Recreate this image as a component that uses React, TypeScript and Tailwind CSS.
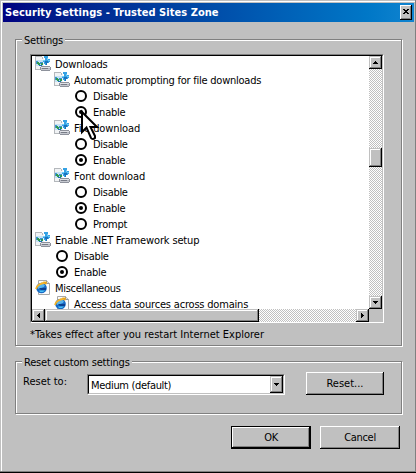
import React from "react";

const raised =
  "bg-[#c0c0c0] shadow-[inset_-1px_-1px_#000,inset_1px_1px_#fff,inset_-2px_-2px_#808080]";
const scrollRaised =
  "bg-[#c0c0c0] shadow-[inset_-1px_-1px_#000,inset_1px_1px_#c0c0c0,inset_-2px_-2px_#808080,inset_2px_2px_#fff]";
const dither =
  "bg-[repeating-conic-gradient(#c0c0c0_0_25%,#fff_0_50%)] bg-[length:2px_2px]";

function DownloadIcon() {
  return (
    <svg width="16" height="16" viewBox="0 0 16 16" className="shrink-0" shapeRendering="crispEdges">
      <path d="M0 0h7l2 3v10H0z" fill="#f1f3f5" />
      <path d="M0 0h1v14H0zM1 0h6v1H1zM7 1h1v2H7zM1 13h4v1H1z" fill="#b4b8bc" />
      <path d="M1 4h7v6H1z" fill="#c4e2f4" />
      <path d="M1 5h2v3H1zM5 6h3v2H5z" fill="#3f95d0" />
      <path d="M2 6h2v2H2zM6 7h2v2H6zM3 7h2v2H3z" fill="#2f9a50" />
      <path d="M4 9h3v1H4z" fill="#1d6fb4" />
      <path d="M9 0h4v3h2v3h-1v1h-2v2h-2V8H9V6H8V4h2V2H9z" fill="#35a2e4" />
      <path d="M12 2h1v2h-1zM8 4h2v1H8zM13 4h2v1h-2z" fill="#74cdf8" />
      <path d="M10 5h3v2h-1v2h-1V7h-1z" fill="#1a72be" />
      <path d="M6 10h9v1h1v3h-1v1H6v-1H5v-3h1z" fill="#8e929c" />
      <path d="M6 11h9v1H6z" fill="#dfe1e6" />
      <path d="M6 12h9v1H6z" fill="#b4b7c0" />
      <path d="M7 12h6v1H7z" fill="#777b86" />
      <path d="M6 13h9v1H6z" fill="#c6c9d0" />
    </svg>
  );
}

function PageIcon() {
  return (
    <svg width="16" height="16" viewBox="0 0 16 16" className="shrink-0">
      <path d="M3.5.5h8l3 3v11h-11z" fill="#fcfcfc" stroke="#a8a8a8" />
      <path d="M11.5.5v3h3" fill="#ddd" stroke="#999" />
      <circle cx="6.500" cy="8" r="5.300" fill="#1769c4" />
      <path d="M3 6q3-4 7-1l-1 2-6 2z" fill="#57b4ee" />
      <path d="M4 8h7v2H6z" fill="#0b3f8f" />
      <path d="M4 10.500h6l-2 1.500H5z" fill="#48c0f4" />
      <path d="M1 9C2 5 6 3 11.500 2.500" fill="none" stroke="#f3b32c" strokeWidth="1.800" />
      <path d="M8 1.500l4 .5-1 3z" fill="#e9a41c" />
    </svg>
  );
}

function Radio({ on }: { on?: boolean }) {
  return (
    <svg width="12" height="12" viewBox="0 0 12 12" className="shrink-0">
      <circle cx="6" cy="6" r="5" fill="#fff" stroke="#000" strokeWidth="2" />
      {on && <circle cx="6" cy="6" r="2" />}
    </svg>
  );
}

type Item = { kind: "dl" | "page" | "on" | "off"; pad: string; text: string; track: string };

const items: Item[] = [
  { kind: "dl", pad: "pl-[3px]", text: "Downloads", track: "tracking-[-0.2px]" },
  { kind: "dl", pad: "pl-[22px]", text: "Automatic prompting for file downloads", track: "tracking-[-0.24px]" },
  { kind: "off", pad: "pl-[43px]", text: "Disable", track: "tracking-[-0.3px]" },
  { kind: "on", pad: "pl-[43px]", text: "Enable", track: "tracking-[-0.2px]" },
  { kind: "dl", pad: "pl-[22px]", text: "File download", track: "tracking-[-0.1px]" },
  { kind: "off", pad: "pl-[43px]", text: "Disable", track: "tracking-[-0.3px]" },
  { kind: "on", pad: "pl-[43px]", text: "Enable", track: "tracking-[-0.2px]" },
  { kind: "dl", pad: "pl-[22px]", text: "Font download", track: "tracking-[-0.1px]" },
  { kind: "off", pad: "pl-[43px]", text: "Disable", track: "tracking-[-0.3px]" },
  { kind: "on", pad: "pl-[43px]", text: "Enable", track: "tracking-[-0.2px]" },
  { kind: "off", pad: "pl-[43px]", text: "Prompt", track: "tracking-[-0.2px]" },
  { kind: "dl", pad: "pl-[3px]", text: "Enable .NET Framework setup", track: "tracking-[-0.15px]" },
  { kind: "off", pad: "pl-[24px]", text: "Disable", track: "tracking-[-0.3px]" },
  { kind: "on", pad: "pl-[24px]", text: "Enable", track: "tracking-[-0.2px]" },
  { kind: "page", pad: "pl-[3px]", text: "Miscellaneous", track: "tracking-[-0.3px]" },
  { kind: "page", pad: "pl-[22px]", text: "Access data sources across domains", track: "tracking-[-0.19px]" },
];

function Row({ item }: { item: Item }) {
  const radio = item.kind === "on" || item.kind === "off";
  return (
    <div className={`flex h-4 shrink-0 items-center ${radio ? "gap-1.5" : "gap-1"} ${item.pad}`}>
      {item.kind === "dl" && <DownloadIcon />}
      {item.kind === "page" && <PageIcon />}
      {radio && <Radio on={item.kind === "on"} />}
      <span className={`pt-[2px] ${item.track}`}>{item.text}</span>
    </div>
  );
}

function Arrow({ d }: { d: string }) {
  return (
    <svg width="7" height="7" viewBox="0 0 7 7" shapeRendering="crispEdges">
      <path d={d} />
    </svg>
  );
}
const up = "M3 2h1v1h1v1h1v1H1V4h1V3h1z";
const down = "M1 2h5v1H5v1H4v1H3V4H2V3H1z";
const left = "M4 1h1v5H4V5H3V4H2V3h1V2h1z";
const right = "M2 1h1v1h1v1h1v1H4v1H3v1H2z";

function Group({ title, className, children }: { title: string; className: string; children: React.ReactNode }) {
  return (
    <fieldset
      className={`ml-[13px] w-[387px] border border-[#808080] shadow-[1px_1px_#fff,inset_1px_1px_#fff] ${className}`}
    >
      <div className="-mt-[8px] ml-[6px] flex h-[14px] w-fit items-center bg-[#c0c0c0] px-[2px] pt-[3px] tracking-[-0.2px]">
        {title}
      </div>
      {children}
    </fieldset>
  );
}

export default function App() {
  return (
    <div className="relative h-[473px] w-[416px] overflow-hidden whitespace-nowrap bg-[#c0c0c0] pl-[2px] pt-[3px] font-['DejaVu_Sans_Condensed','DejaVu_Sans',sans-serif] text-[11px] leading-4 text-black shadow-[inset_0_-1px_#000,inset_-1px_-2px_#808080,inset_1px_1px_#c0c0c0,inset_2px_2px_#fff]">
      <header className="ml-px flex h-[19px] w-[411px] items-center justify-between bg-linear-to-r from-[#000080] to-[#1084d0] pl-[2px] pr-[2px] text-white">
        <b className="pt-px text-[11px] tracking-[0.05px]">Security Settings - Trusted Sites Zone</b>
        <button className={`flex h-[15px] w-[12px] justify-center pt-[3px] ${raised}`}>
          <svg width="8" height="7" viewBox="0 0 8 7" shapeRendering="crispEdges">
            <path d="M1 1h2v1h2V1h2v1H6v1H5v1h1v1h1v1H5V5H3v1H1V5h1V4h1V3H2V2H1z" fill="#000" />
          </svg>
        </button>
      </header>

      <Group title="Settings" className="mt-[17px] h-[307px]">
        <div className="ml-[14px] mt-[8px] h-[269px] w-[354px] border border-b-white border-l-[#808080] border-r-white border-t-[#808080]">
          <div className="flex h-[267px] w-[352px] flex-col border border-b-[#c0c0c0] border-l-black border-r-[#c0c0c0] border-t-black bg-[#c0c0c0]">
            <div className="flex h-[253px]">
              <div className="flex w-[337px] flex-col overflow-hidden bg-white">
                {items.map((item, i) => (
                  <Row key={i} item={item} />
                ))}
              </div>
              <div className={`flex w-[13px] flex-col ${dither}`}>
                <div className={`flex h-[13px] items-center justify-center ${scrollRaised}`}><Arrow d={up} /></div>
                <div className={`mt-[79px] h-[19px] ${scrollRaised}`} />
                <div className={`mt-auto flex h-[13px] items-center justify-center ${scrollRaised}`}><Arrow d={down} /></div>
              </div>
            </div>
            <div className={`flex h-[13px] w-[337px] shrink-0 ${dither}`}>
              <div className={`flex w-[13px] items-center justify-center ${scrollRaised}`}><Arrow d={left} /></div>
              <div className={`w-[214px] ${scrollRaised}`} />
              <div className={`ml-auto flex w-[13px] items-center justify-center ${scrollRaised}`}><Arrow d={right} /></div>
            </div>
          </div>
        </div>
        <div className="ml-[14px] mt-[4px]">*Takes effect after you restart Internet Explorer</div>
      </Group>

      <Group title="Reset custom settings" className="mt-[15px] h-[53px]">
        <div className="ml-[7px] mt-[4px] flex items-start">
          <span className="mt-[2px] w-[64px]">Reset to:</span>
          <div className="mt-[2px] h-[21px] w-[198px] border border-b-white border-l-[#808080] border-r-white border-t-[#808080]">
            <div className="flex h-[19px] w-[196px] items-center justify-between border border-b-[#c0c0c0] border-l-black border-r-[#c0c0c0] border-t-black bg-white pl-[2px]">
              <span className="pt-[2px] tracking-[-0.32px]">Medium (default)</span>
              <div className={`flex h-[17px] w-[13px] items-center justify-center ${scrollRaised}`}><Arrow d={down} /></div>
            </div>
          </div>
          <button className={`ml-[21px] h-[23px] w-[78px] ${raised}`}>Reset...</button>
        </div>
      </Group>

      <footer className="mt-[12px] flex gap-[9px] pl-[229px]">
        <button className="h-[23px] w-[80px] border border-black bg-[#c0c0c0] tracking-[-0.3px] shadow-[inset_-1px_-1px_#000,inset_1px_1px_#fff,inset_-2px_-2px_#808080]">OK</button>
        <button className={`h-[23px] w-[80px] tracking-[-0.3px] ${raised}`}>Cancel</button>
      </footer>

      <svg className="absolute left-[79px] top-[108px]" width="22" height="34" viewBox="0 0 22 34">
        <path
          d="M3 4v20l4.500-4.500 4.500 10.500q1.500 2 4 0v-2l-4.500-9H18z"
          fill="#fff"
          stroke="#000"
          strokeWidth="2"
        />
      </svg>
    </div>
  );
}
